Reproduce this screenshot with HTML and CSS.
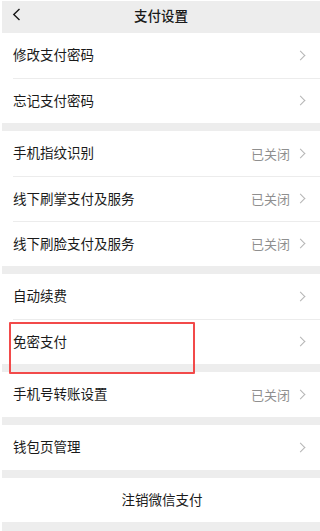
FILE: index.html
```html
<!DOCTYPE html>
<html lang="zh-CN">
<head>
<meta charset="utf-8">
<title>支付设置</title>
<link rel="stylesheet" href="styles.css">
</head>
<body>
<div class="page">
  <header class="nav">
    <span class="back">
      <svg width="9" height="13" viewBox="0 0 9 13"><path d="M7.5 1 L1.8 6.5 L7.5 12" fill="none" stroke="#1a1a1a" stroke-width="1.4"/></svg>
    </span>
    <h1 class="title">支付设置</h1>
  </header>

  <section class="group">
    <div class="row"><div class="inner"><span class="label">修改支付密码</span><span class="chev"></span></div></div>
    <div class="row"><div class="inner"><span class="label">忘记支付密码</span><span class="chev"></span></div></div>
  </section>

  <section class="group">
    <div class="row"><div class="inner"><span class="label">手机指纹识别</span><span class="value">已关闭</span><span class="chev"></span></div></div>
    <div class="row"><div class="inner"><span class="label">线下刷掌支付及服务</span><span class="value">已关闭</span><span class="chev"></span></div></div>
    <div class="row"><div class="inner"><span class="label">线下刷脸支付及服务</span><span class="value">已关闭</span><span class="chev"></span></div></div>
  </section>

  <section class="group">
    <div class="row"><div class="inner"><span class="label">自动续费</span><span class="chev"></span></div></div>
    <div class="row marked"><div class="inner"><span class="label">免密支付</span><span class="chev"></span></div><span class="highlight"></span></div>
  </section>

  <section class="group">
    <div class="row"><div class="inner"><span class="label">手机号转账设置</span><span class="value">已关闭</span><span class="chev"></span></div></div>
  </section>

  <section class="group">
    <div class="row"><div class="inner"><span class="label">钱包页管理</span><span class="chev"></span></div></div>
  </section>

  <section class="group">
    <div class="row center"><span class="label">注销微信支付</span></div>
  </section>
</div>
</body>
</html>
```

FILE: styles.css
```css
* { box-sizing: border-box; margin: 0; padding: 0; }
html, body { background: #ffffff; }
body {
  font-family: "Noto Sans CJK SC", "Noto Sans", sans-serif;
  color: #1a1a1a;
  overflow: hidden;
}
.page {
  background: #ededed;
  border-top: 1px solid #ffffff;
  border-left: 2px solid #ffffff;
  height: 531px;
}
.nav {
  height: 32px;
  display: flex;
  align-items: center;
  justify-content: center;
  position: relative;
  background: #ededed;
}
.back {
  position: absolute;
  left: 10px;
  top: 7px;
  width: 9px;
  height: 13px;
  display: block;
}
.back svg { display: block; }
.title {
  font-size: 13.5px;
  font-weight: 500;
  line-height: 1;
  margin-top: -3px;
  color: #1a1a1a;
}
.group {
  background: #ffffff;
  margin-bottom: 8px;
}
.row {
  position: relative;
  background: #ffffff;
  padding-left: 11px;
}
.inner {
  height: 45px;
  display: flex;
  align-items: center;
  padding-right: 14px;
}
.row + .row .inner {
  height: 44px;
  border-top: 1px solid #ececec;
  box-sizing: content-box;
}
.label {
  font-size: 13.5px;
  line-height: 1;
  flex: 1;
  color: #1a1a1a;
  margin-top: -1px;
}
.value {
  font-size: 13px;
  color: #8f8f8f;
  line-height: 1;
  margin-right: 10px;
  margin-top: -1px;
}
.chev {
  width: 6px;
  height: 10px;
  display: block;
  position: relative;
}
.chev::before {
  content: "";
  position: absolute;
  left: -3px;
  top: 1px;
  width: 6px;
  height: 6px;
  border-top: 1.2px solid #b5b5b5;
  border-right: 1.2px solid #b5b5b5;
  transform: rotate(45deg);
}
.center {
  height: 44px;
  display: flex;
  align-items: center;
  justify-content: center;
  padding-left: 0;
}
.center .label {
  flex: none;
  margin-left: 2px;
}
.highlight {
  position: absolute;
  left: 7px;
  top: 3px;
  width: 186px;
  height: 52px;
  border: 2px solid #f24a4a;
  border-radius: 1px;
  z-index: 2;
}
```
